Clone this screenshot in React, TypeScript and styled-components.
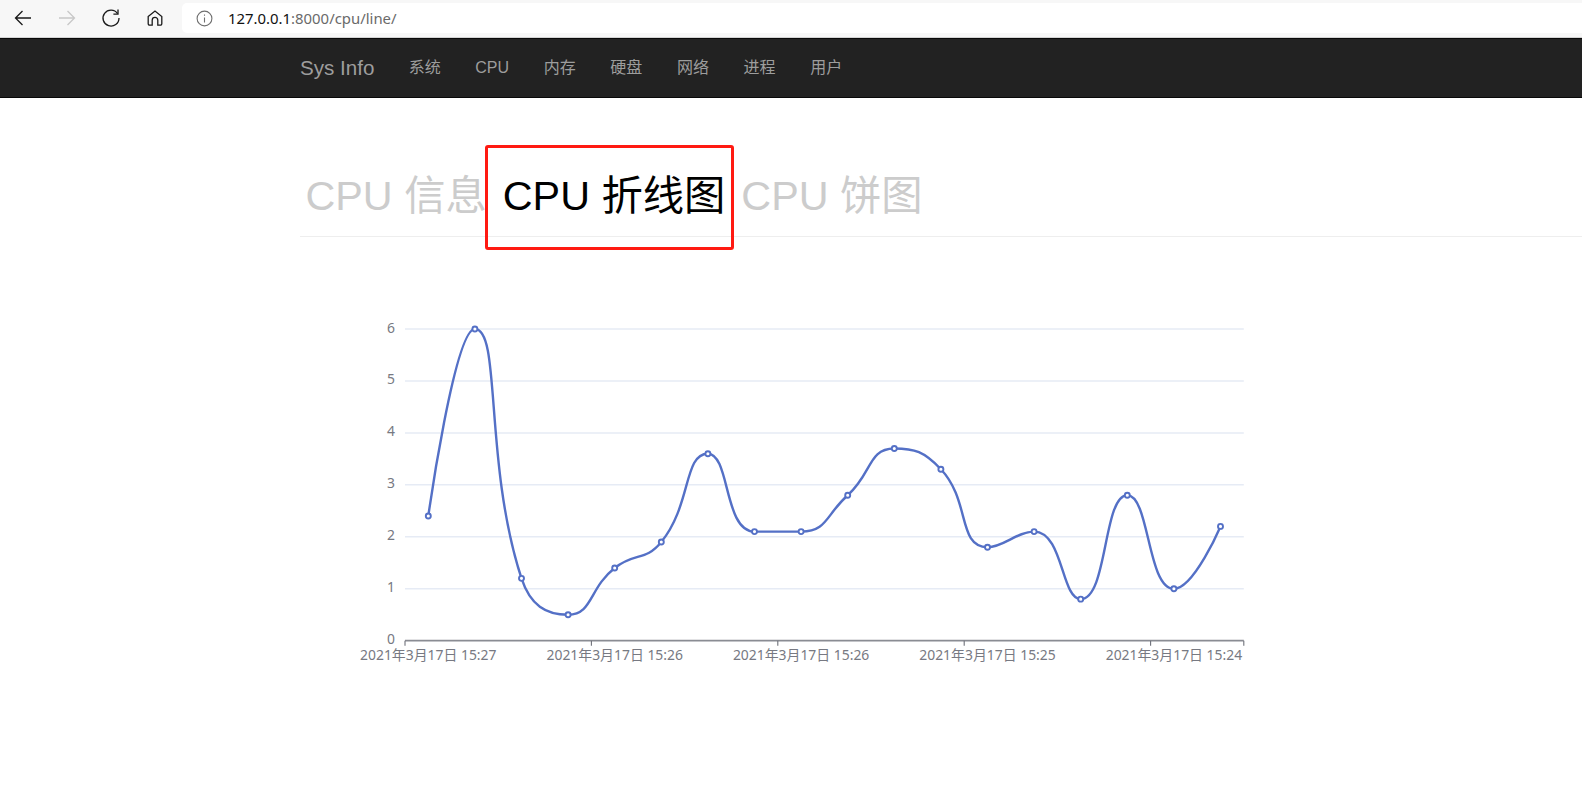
import * as React from "react";
import styled, { createGlobalStyle } from "styled-components";

const GlobalStyle = createGlobalStyle`
  html, body {
    margin: 0;
    padding: 0;
    background: #fff;
    overflow: hidden;
    font-family: "Liberation Sans", "Noto Sans CJK SC", sans-serif;
  }
`;

const NAV_ITEMS = ["系统", "CPU", "内存", "硬盘", "网络", "进程", "用户"];
const TABS = ["CPU 信息", "CPU 折线图", "CPU 饼图"];
const VALUES = [2.4, 6, 1.2, 0.5, 1.4, 1.9, 3.6, 2.1, 2.1, 2.8, 3.7, 3.3, 1.8, 2.1, 0.8, 2.8, 1, 2.2];
const X_LABELS = ["2021年3月17日 15:27", "2021年3月17日 15:26", "2021年3月17日 15:26", "2021年3月17日 15:25", "2021年3月17日 15:24"];

// chart geometry, relative to the svg box
const LEFT = 48;
const TOP = 32;
const STEP = 46.6;
const UNIT = 51.95;
const BOTTOM = TOP + UNIT * 6;
const RIGHT = LEFT + STEP * VALUES.length;

const clamp = (v: number, a: number, b: number) => Math.max(Math.min(v, Math.max(a, b)), Math.min(a, b));

function smoothPath(points: number[][], smooth: number) {
  let d = `M${points[0][0]} ${points[0][1]}`;
  let cp0x = points[0][0];
  let cp0y = points[0][1];
  for (let i = 1; i < points.length; i++) {
    const [px, py] = points[i - 1];
    const [x, y] = points[i];
    let cp1x = x;
    let cp1y = y;
    let nextCpx = x;
    let nextCpy = y;
    if (i < points.length - 1) {
      const [nx, ny] = points[i + 1];
      const lenPrev = Math.hypot(x - px, y - py);
      const lenNext = Math.hypot(nx - x, ny - y);
      const ratio = lenNext / (lenNext + lenPrev);
      nextCpx = clamp(x + (nx - px) * smooth * ratio, nx, x);
      nextCpy = clamp(y + (ny - py) * smooth * ratio, ny, y);
      cp1x = clamp(x - ((nextCpx - x) * lenPrev) / lenNext, px, x);
      cp1y = clamp(y - ((nextCpy - y) * lenPrev) / lenNext, py, y);
      nextCpx = x + ((x - cp1x) * lenNext) / lenPrev;
      nextCpy = y + ((y - cp1y) * lenNext) / lenPrev;
    }
    d += `C${cp0x} ${cp0y} ${cp1x} ${cp1y} ${x} ${y}`;
    cp0x = nextCpx;
    cp0y = nextCpy;
  }
  return d;
}

function LineChart() {
  const points = VALUES.map((v, i) => [LEFT + STEP * (i + 0.5), BOTTOM - v * UNIT]);
  return (
    <ChartSvg width={930} height={370} viewBox="0 0 930 370">
      {[1, 2, 3, 4, 5, 6].map(v => (
        <line key={v} x1={LEFT} x2={RIGHT} y1={BOTTOM - v * UNIT} y2={BOTTOM - v * UNIT} stroke="#e6ebf5" strokeWidth={1.5} />
      ))}
      {[0, 1, 2, 3, 4, 5, 6].map(v => (
        <AxisLabel key={v} x={LEFT - 10} y={BOTTOM - v * UNIT + 3.5} textAnchor="end">
          {v}
        </AxisLabel>
      ))}
      <line x1={LEFT} x2={RIGHT} y1={BOTTOM} y2={BOTTOM} stroke="#8a8c93" strokeWidth={1.7} />
      {[0, 4, 8, 12, 16, 18].map(i => (
        <line key={i} x1={LEFT + STEP * i} x2={LEFT + STEP * i} y1={BOTTOM} y2={BOTTOM + 5} stroke="#6E7079" strokeWidth={1.1} />
      ))}
      {X_LABELS.map((label, i) => (
        <AxisLabel key={i} x={LEFT + STEP * (i * 4 + 0.5)} y={BOTTOM + 19} textAnchor="middle">
          {label}
        </AxisLabel>
      ))}
      <path d={smoothPath(points, 0.5)} fill="none" stroke="#5470c6" strokeWidth={2.4} strokeLinejoin="round" />
      {points.map(([x, y], i) => (
        <circle key={i} cx={x} cy={y} r={2.5} fill="#fff" stroke="#5470c6" strokeWidth={1.9} />
      ))}
    </ChartSvg>
  );
}

export default function App() {
  return (
    <Page>
      <GlobalStyle />
      <BrowserBar>
        <IconButton>
          <svg width="20" height="20" viewBox="0 0 20 20" fill="none" stroke="#1a1a1a" strokeWidth="1.3">
            <path d="M18 10H2.5M9.5 3 2.5 10l7 7" />
          </svg>
        </IconButton>
        <IconButton>
          <svg width="20" height="20" viewBox="0 0 20 20" fill="none" stroke="#c8c8c8" strokeWidth="1.3">
            <path d="M2 10h15.5M10.5 3l7 7-7 7" />
          </svg>
        </IconButton>
        <IconButton>
          <svg width="20" height="20" viewBox="0 0 20 20" fill="none" stroke="#1a1a1a" strokeWidth="1.3">
            <path d="M16.6 5.6A8 8 0 1 0 18 10" />
            <path d="M17 1.5v4.6h-4.6" />
          </svg>
        </IconButton>
        <IconButton>
          <svg width="18" height="18" viewBox="0 0 18 18" fill="none" stroke="#1a1a1a" strokeWidth="1.3">
            <path d="M2.2 7.6 9 2l6.8 5.6v7.2a1.4 1.4 0 0 1-1.4 1.4h-2.6v-5a2.8 2.8 0 0 0-5.6 0v5H3.6a1.4 1.4 0 0 1-1.4-1.4z" />
          </svg>
        </IconButton>
        <AddressBar>
          <svg width="17" height="17" viewBox="0 0 17 17" fill="none" stroke="#6f6f6f" strokeWidth="1.1">
            <circle cx="8.5" cy="8.5" r="7.4" />
            <path d="M8.5 7.4v5M8.5 4.4v1.4" />
          </svg>
          <Url>
            127.0.0.1<UrlRest>:8000/cpu/line/</UrlRest>
          </Url>
        </AddressBar>
      </BrowserBar>
      <Navbar>
        <Brand>Sys Info</Brand>
        <NavList>
          {NAV_ITEMS.map(item => (
            <NavItem key={item}>{item}</NavItem>
          ))}
        </NavList>
      </Navbar>
      <Main>
        <PageHeader>
          {TABS.map((tab, i) => (
            <Tab key={tab} $active={i === 1}>
              {tab}
            </Tab>
          ))}
        </PageHeader>
        <LineChart />
      </Main>
    </Page>
  );
}

const Page = styled.div`
  width: 1582px;
  height: 806px;
  overflow: hidden;
  background: #fff;
`;

const BrowserBar = styled.div`
  display: flex;
  align-items: center;
  height: 38px;
  padding: 0 0 1px 1px;
  box-sizing: border-box;
  background: #f7f7f7;
  border-bottom: 1px solid #d4d4d4;
`;

const IconButton = styled.div`
  display: flex;
  align-items: center;
  justify-content: center;
  width: 44px;
  height: 30px;
`;

const AddressBar = styled.div`
  flex: 1;
  display: flex;
  align-items: center;
  gap: 15px;
  height: 30px;
  margin-left: 5px;
  padding-left: 14px;
  background: #fff;
  border-radius: 5px 0 0 5px;
`;

const Url = styled.span`
  font-family: "Noto Sans", sans-serif;
  font-size: 14.9px;
  line-height: 20px;
  color: #111;
`;

const UrlRest = styled.span`
  color: #6a6a6a;
`;

const Navbar = styled.nav`
  display: flex;
  align-items: center;
  height: 60px;
  box-sizing: border-box;
  padding-left: 300px;
  background: #222;
  border-top: 1px solid #080808;
  border-bottom: 1px solid #080808;
`;

const Brand = styled.a`
  font-size: 20.6px;
  line-height: 24px;
  color: #9d9d9d;
`;

const NavList = styled.ul`
  display: flex;
  list-style: none;
  margin: 0 0 0 17px;
  padding: 0;
`;

const NavItem = styled.li`
  padding: 0 17.3px;
  font-size: 16px;
  line-height: 22px;
  color: #9d9d9d;
`;

const Main = styled.main`
  padding-left: 300px;
`;

const PageHeader = styled.div`
  display: flex;
  gap: 16px;
  height: 139px;
  box-sizing: border-box;
  margin-right: -300px;
  padding: 74px 0 0 5.5px;
  border-bottom: 1px solid #eee;
`;

const Tab = styled.span<{ $active?: boolean }>`
  position: relative;
  font-size: 41.3px;
  line-height: 48px;
  white-space: nowrap;
  color: ${props => (props.$active ? "#000" : "#ccc")};

  ${props =>
    props.$active &&
    `
    &::after {
      content: "";
      position: absolute;
      left: -18px;
      right: -9px;
      top: -27px;
      bottom: -14px;
      border: 3px solid #ff1a12;
      border-radius: 3px;
    }
  `}
`;

const ChartSvg = styled.svg`
  display: block;
  margin: 60px 0 0 57px;
`;

const AxisLabel = styled.text`
  font-family: "Noto Sans", "Noto Sans CJK SC", sans-serif;
  font-size: 13.9px;
  fill: #777982;
`;
